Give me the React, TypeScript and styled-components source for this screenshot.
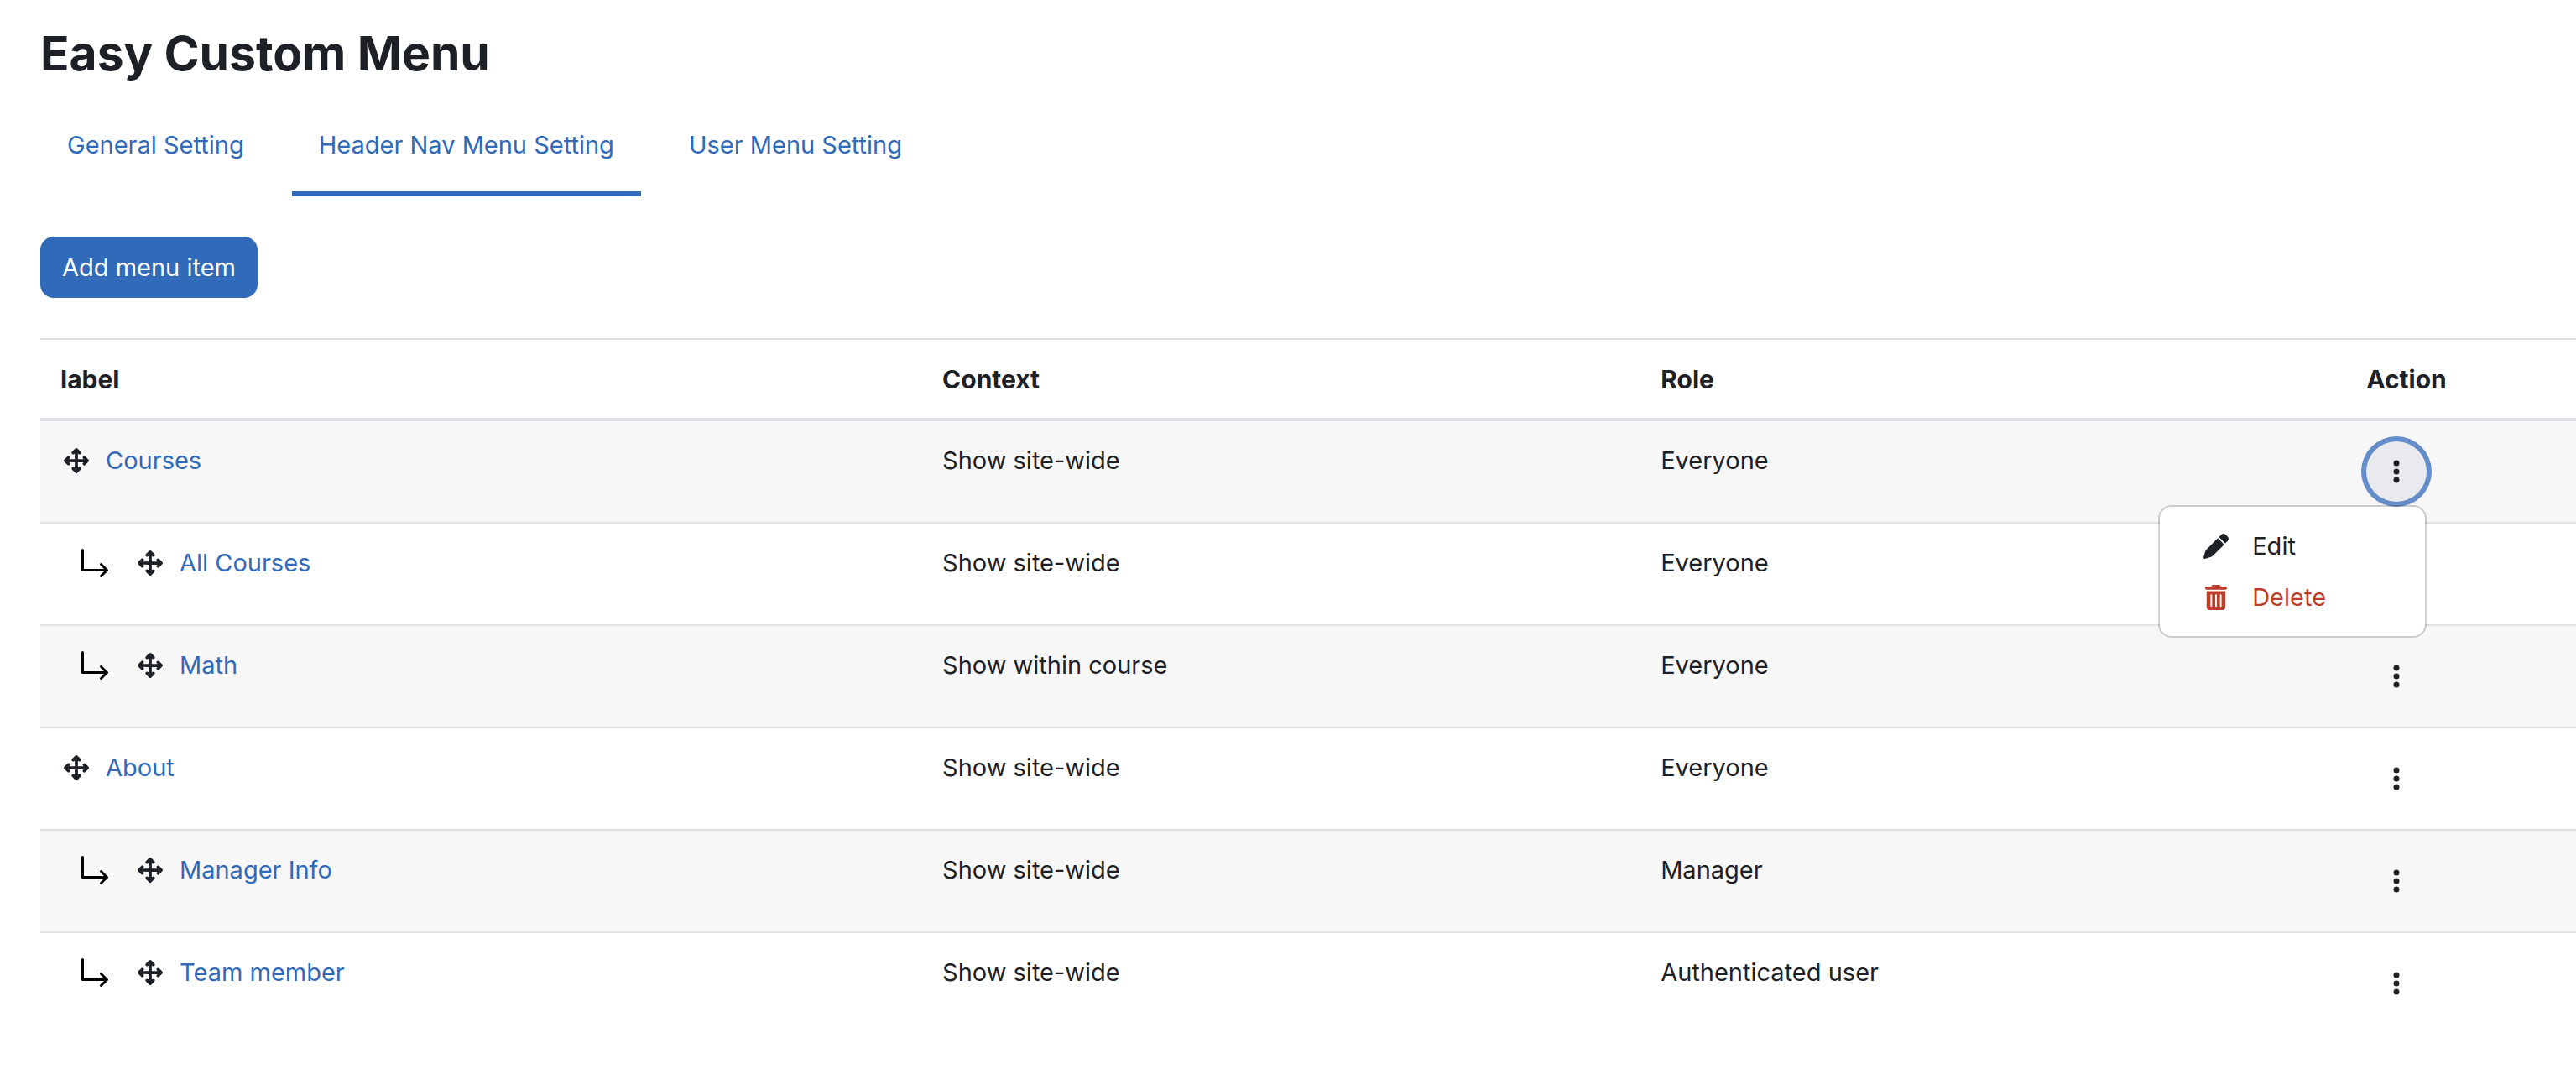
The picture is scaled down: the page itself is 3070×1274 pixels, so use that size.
import React from "react";
import styled, { createGlobalStyle, css } from "styled-components";
import {
  FaArrowsUpDownLeftRight,
  FaEllipsisVertical,
  FaPen,
  FaTrashCan,
} from "react-icons/fa6";

const color = {
  text: "#1d2125",
  link: "#306ab9",
  border: "#dee2e6",
  stripe: "#f7f7f7",
  danger: "#bb3e2b",
  ring: "#648dca",
  active: "#e9eaee",
};

const GlobalStyle = createGlobalStyle`
  *, *::before, *::after { box-sizing: border-box; }
  body {
    margin: 0;
    background: #fff;
    color: ${color.text};
    font-family: Inter, "Liberation Sans", sans-serif;
    font-size: 29px;
    line-height: 46px;
  }
`;

const Page = styled.main`
  padding: 28px 0 40px 48px;
`;

const Title = styled.h1`
  margin: 0 0 18px;
  font-size: 57px;
  line-height: 72px;
  font-weight: 700;
`;

const Tabs = styled.nav`
  display: flex;
  gap: 25px;
  margin-bottom: 48px;
`;

const Tab = styled.a<{ $active?: boolean }>`
  padding: 32px;
  border-bottom: 6px solid ${(p) => (p.$active ? color.link : "transparent")};
  color: ${color.link};
  text-decoration: none;
  white-space: nowrap;
`;

const AddButton = styled.button`
  display: block;
  margin: 0 0 48px;
  padding: 14px 26px 13px;
  border: 0;
  border-radius: 16px;
  background: ${color.link};
  color: #fff;
  font: inherit;
  white-space: nowrap;
`;

const Table = styled.table`
  width: 100%;
  table-layout: fixed;
  border-collapse: separate;
  border-spacing: 0;
`;

const Column = styled.col<{ $share?: string }>`
  width: ${(p) => p.$share ?? "auto"};
`;

const HeadCell = styled.th`
  padding: 24px 24px 23px;
  border-top: 2px solid ${color.border};
  border-bottom: 4px solid ${color.border};
  font-size: 30px;
  font-weight: 700;
  text-align: left;
`;

const Cell = styled.td`
  padding: 24px;
  vertical-align: top;
`;

const Row = styled.tr`
  &:nth-child(odd) {
    background: ${color.stripe};
  }
  &:not(:last-child) > ${Cell} {
    border-bottom: 2px solid ${color.border};
  }
`;

const Item = styled.div`
  display: flex;
  align-items: center;
`;

const Branch = styled.svg`
  width: 36px;
  height: 36px;
  margin: 0 30px 0 22px;
  fill: none;
  stroke: #000;
  stroke-width: 3;
  stroke-linecap: round;
  stroke-linejoin: round;
`;

const DragHandle = styled.span`
  display: flex;
  justify-content: center;
  width: 38px;
  margin-right: 16px;
  font-size: 30px;
  cursor: move;
`;

const ItemLink = styled.a`
  color: ${color.link};
  text-decoration: none;
`;

const Actions = styled.div`
  position: relative;
  width: 72px;
`;

const Toggle = styled.button<{ $open: boolean }>`
  display: flex;
  align-items: center;
  justify-content: center;
  width: 72px;
  height: 72px;
  padding: 0;
  border: 0;
  border-radius: 50%;
  background: none;
  color: inherit;
  font-size: 32px;
  ${(p) =>
    p.$open &&
    css`
      background: ${color.active};
      box-shadow: 0 0 0 6px ${color.ring};
    `}
`;

const Menu = styled.div`
  position: absolute;
  z-index: 1;
  top: 76px;
  right: 0;
  width: 320px;
  padding: 16px 0;
  border: 2px solid rgba(0, 0, 0, 0.175);
  border-radius: 16px;
  background: #fff;
  background-clip: padding-box;
`;

const MenuItem = styled.a<{ $danger?: boolean }>`
  display: flex;
  align-items: center;
  gap: 24px;
  padding: 8px 48px 7px;
  color: ${(p) => (p.$danger ? color.danger : color.text)};
  text-decoration: none;
`;

const MenuIcon = styled.span`
  display: flex;
  justify-content: center;
  width: 38px;
  font-size: 30px;
`;

type MenuEntry = {
  label: string;
  context: string;
  role: string;
  child?: boolean;
};

const entries: MenuEntry[] = [
  { label: "Courses", context: "Show site-wide", role: "Everyone" },
  { label: "All Courses", context: "Show site-wide", role: "Everyone", child: true },
  { label: "Math", context: "Show within course", role: "Everyone", child: true },
  { label: "About", context: "Show site-wide", role: "Everyone" },
  { label: "Manager Info", context: "Show site-wide", role: "Manager", child: true },
  { label: "Team member", context: "Show site-wide", role: "Authenticated user", child: true },
];

const BranchArrow = () => (
  <Branch viewBox="0 0 36 36" aria-hidden="true">
    <path d="M4.500 2.500V26.500H33.500M26.500 19.500L33.500 26.500L26.500 33.500" />
  </Branch>
);

export default function App() {
  const [open, setOpen] = React.useState<string | null>("Courses");

  return (
    <>
      <GlobalStyle />
      <Page>
        <Title>Easy Custom Menu</Title>
        <Tabs>
          <Tab href="#general">General Setting</Tab>
          <Tab href="#header" $active aria-current="page">
            Header Nav Menu Setting
          </Tab>
          <Tab href="#user">User Menu Setting</Tab>
        </Tabs>
        <AddButton type="button">Add menu item</AddButton>
        <Table>
          <colgroup>
            <Column $share="34.78%" />
            <Column $share="28.33%" />
            <Column $share="27.83%" />
            <Column />
          </colgroup>
          <thead>
            <tr>
              <HeadCell scope="col">label</HeadCell>
              <HeadCell scope="col">Context</HeadCell>
              <HeadCell scope="col">Role</HeadCell>
              <HeadCell scope="col">Action</HeadCell>
            </tr>
          </thead>
          <tbody>
            {entries.map((entry) => (
              <Row key={entry.label}>
                <Cell>
                  <Item>
                    {entry.child && <BranchArrow />}
                    <DragHandle>
                      <FaArrowsUpDownLeftRight />
                    </DragHandle>
                    <ItemLink href="#edit">{entry.label}</ItemLink>
                  </Item>
                </Cell>
                <Cell>{entry.context}</Cell>
                <Cell>{entry.role}</Cell>
                <Cell>
                  <Actions>
                    <Toggle
                      type="button"
                      aria-label={`Actions for ${entry.label}`}
                      aria-expanded={open === entry.label}
                      $open={open === entry.label}
                      onClick={() =>
                        setOpen(open === entry.label ? null : entry.label)
                      }
                    >
                      <FaEllipsisVertical />
                    </Toggle>
                    {open === entry.label && (
                      <Menu>
                        <MenuItem href="#edit">
                          <MenuIcon>
                            <FaPen />
                          </MenuIcon>
                          Edit
                        </MenuItem>
                        <MenuItem href="#delete" $danger>
                          <MenuIcon>
                            <FaTrashCan />
                          </MenuIcon>
                          Delete
                        </MenuItem>
                      </Menu>
                    )}
                  </Actions>
                </Cell>
              </Row>
            ))}
          </tbody>
        </Table>
      </Page>
    </>
  );
}
